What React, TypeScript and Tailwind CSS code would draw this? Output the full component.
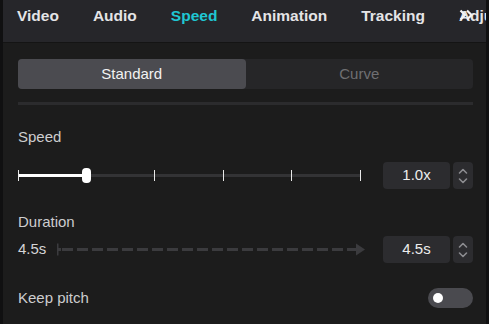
import React from "react";

const tabs = ["Video", "Audio", "Speed", "Animation", "Tracking"];

function Stepper() {
	return (
		<div className="flex h-[27px] w-[20px] flex-col items-center justify-center rounded-[4px] bg-[#2c2c2f]">
			<svg width="10" height="18" viewBox="0 0 10 18" fill="none">
				<path d="M1.5 6 L5 2.5 L8.5 6" stroke="#8c8c90" strokeWidth="1.6" strokeLinecap="round" strokeLinejoin="round" />
				<path d="M1.5 12 L5 15.5 L8.5 12" stroke="#8c8c90" strokeWidth="1.6" strokeLinecap="round" strokeLinejoin="round" />
			</svg>
		</div>
	);
}

function ValueBox({ value }: { value: string }) {
	return (
		<div className="flex items-center gap-[3px]">
			<div className="flex h-[27px] w-[67px] items-center justify-center rounded-[4px] bg-[#2c2c2f] text-[15px] text-[#ececec]">
				{value}
			</div>
			<Stepper />
		</div>
	);
}

function SpeedSlider() {
	const ticks = [0, 136, 205, 273, 342];
	return (
		<div className="relative h-[16px] w-[343px]">
			<div className="absolute left-0 right-0 top-[6px] h-[3px] bg-[#333335]" />
			<div className="absolute left-0 top-[6px] h-[3px] w-[68px] bg-white" />
			{ticks.map((x) => (
				<div
					key={x}
					className="absolute top-[2px] h-[11px] w-[1px] bg-[#e8e8e8]"
					style={{ left: x }}
				/>
			))}
			<div className="absolute left-[64px] top-0 h-[15px] w-[9px] rounded-[4px] bg-white" />
		</div>
	);
}

function DurationLine() {
	const dashes = [];
	for (let x = 62; x < 355; x += 15) {
		dashes.push(<rect key={x} x={x - 57} y="5" width="11" height="3" fill="#3b3b3e" />);
	}
	return (
		<svg width="310" height="13" viewBox="0 0 310 13">
			<rect x="0" y="0.5" width="1.5" height="12" fill="#3b3b3e" />
			<rect x="0" y="5" width="4" height="3" fill="#3b3b3e" />
			{dashes}
			<path d="M299 0.5 L308 6.5 L299 12.5 Z" fill="#3b3b3e" />
		</svg>
	);
}

export default function App() {
	return (
		<div
			className="flex h-[324px] w-[489px] bg-[#101011] px-[3px]"
			style={{ fontFamily: '"Liberation Sans", Arial, sans-serif' }}
		>
			<div className="flex flex-1 flex-col overflow-hidden bg-[#1c1c1c]">
				<div className="relative flex h-[43px] shrink-0 items-center gap-[34px] overflow-hidden border-b border-[#141414] bg-[#26262a] pb-[10px] pl-[14px] text-[15.5px] font-bold text-[#e4e4e6]">
					{tabs.map((t) => (
						<span key={t} className={t === "Speed" ? "text-[#1fc6d3]" : ""}>
							{t}
						</span>
					))}
					<span className="relative whitespace-nowrap">
						Adju
						<svg
							className="absolute left-[0px] top-[5px]"
							width="15"
							height="12"
							viewBox="0 0 15 12"
							fill="none"
						>
							<path d="M1.5 1.5 L6 6 L1.5 10.5" stroke="#f4f4f4" strokeWidth="2.2" strokeLinejoin="round" />
							<path d="M8 1.5 L12.5 6 L8 10.5" stroke="#f4f4f4" strokeWidth="2.2" strokeLinejoin="round" />
						</svg>
					</span>
				</div>

				<div className="flex flex-col pl-[15px] pr-[13px] pt-[16px] text-[15px] text-[#cdcdcf]">
					<div className="flex h-[30px] rounded-[4px] bg-[#262628]">
						<div className="flex flex-1 items-center justify-center rounded-[4px] bg-[#4b4b50] text-[#f2f2f2]">
							Standard
						</div>
						<div className="flex flex-1 items-center justify-center text-[#6f6f72]">
							Curve
						</div>
					</div>
					<div className="mt-[13px] h-[3px] bg-[#2b2b2d]" />

					<div className="mt-[23px] leading-[18px]">Speed</div>
					<div className="mt-[16px] flex items-center justify-between">
						<SpeedSlider />
						<ValueBox value="1.0x" />
					</div>

					<div className="mt-[24px] leading-[18px]">Duration</div>
					<div className="mt-[5px] flex items-center justify-between">
						<div className="flex items-center gap-[11px]">
							<span className="text-[#d4d4d6]">4.5s</span>
							<DurationLine />
						</div>
						<ValueBox value="4.5s" />
					</div>

					<div className="mt-[24px] flex items-center justify-between">
						<span>Keep pitch</span>
						<div className="flex h-[20px] w-[45px] items-center rounded-full bg-[#4a4a4f] pl-[5px]">
							<div className="h-[10px] w-[10px] rounded-full bg-white" />
						</div>
					</div>
				</div>
			</div>
		</div>
	);
}
